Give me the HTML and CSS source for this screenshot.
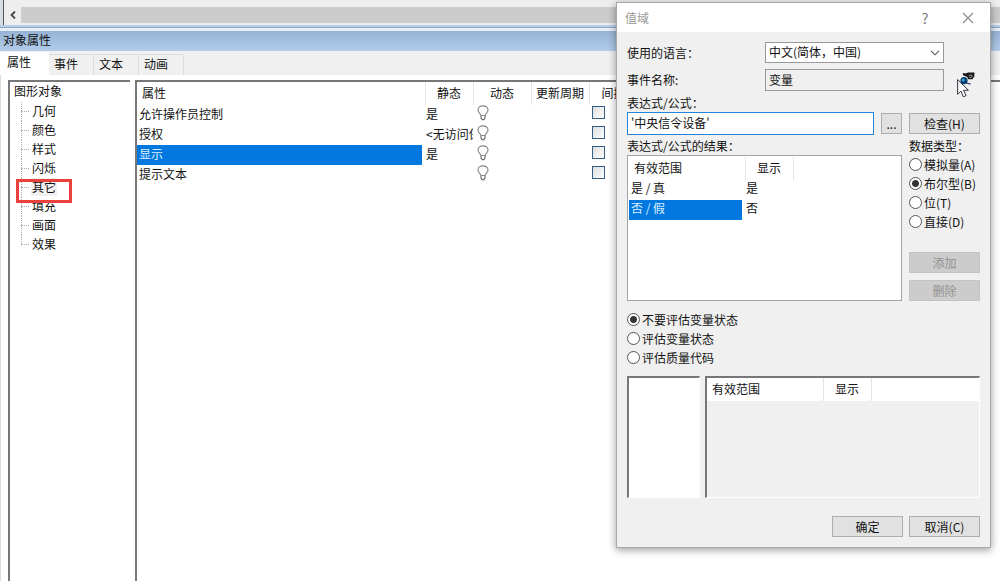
FILE: index.html
```html
<!DOCTYPE html>
<html lang="zh-CN">
<head>
<meta charset="utf-8">
<title>对象属性</title>
<link rel="stylesheet" href="styles.css">
</head>
<body>
<svg class="defs" aria-hidden="true">
  <symbol id="bulb" viewBox="0 0 12 16">
    <path d="M3.900 10.600C3.900 8.800 1 7.600 1 4.900 1 2.400 3.200.9 6 .9s5 1.500 5 4c0 2.700-2.900 3.900-2.900 5.700z" fill="#fff" stroke="#858585" stroke-width="1.100"/>
    <path d="M4 11v2L5.200 14.600H6.800L8 13V11" fill="#fff" stroke="#666" stroke-width="1.100"/>
  </symbol>
</svg>
<main class="app">
  <div class="canvas-edge">
    <div class="scrollbar">
      <button class="scroll-left" aria-label="向左滚动"><svg width="6" height="8" viewBox="0 0 6 8"><path d="M5 .5 1.500 4 5 7.500" fill="none" stroke="#444" stroke-width="1.800"/></svg></button>
      <div class="thumb"></div>
    </div>
  </div>
  <h1 class="panel-title">对象属性</h1>
  <nav class="tabs" role="tablist">
    <button class="tab active" role="tab" aria-selected="true">属性</button>
    <button class="tab" role="tab">事件</button>
    <button class="tab" role="tab">文本</button>
    <button class="tab" role="tab">动画</button>
  </nav>
  <div class="panes">
    <section class="tree">
      <div class="root">图形对象</div>
      <ul>
        <li><span>几何</span></li>
        <li><span>颜色</span></li>
        <li><span>样式</span></li>
        <li><span>闪烁</span></li>
        <li class="marked"><span>其它</span></li>
        <li><span>填充</span></li>
        <li><span>画面</span></li>
        <li><span>效果</span></li>
      </ul>
    </section>
    <section class="props">
      <table class="grid main-grid">
        <colgroup><col class="c-name"><col class="c-static"><col class="c-dyn"><col class="c-cycle"><col></colgroup>
        <thead><tr><th class="first">属性</th><th>静态</th><th>动态</th><th>更新周期</th><th class="indirect">间接</th></tr></thead>
        <tbody>
          <tr><td><span>允许操作员控制</span></td><td>是</td><td class="icon"><svg class="bulb"><use href="#bulb"/></svg></td><td></td><td><input type="checkbox" aria-label="间接 允许操作员控制"></td></tr>
          <tr><td><span>授权</span></td><td>&lt;无访问保护&gt;</td><td class="icon"><svg class="bulb"><use href="#bulb"/></svg></td><td></td><td><input type="checkbox" aria-label="间接 授权"></td></tr>
          <tr class="selected"><td><span>显示</span></td><td>是</td><td class="icon"><svg class="bulb"><use href="#bulb"/></svg></td><td></td><td><input type="checkbox" aria-label="间接 显示"></td></tr>
          <tr><td><span>提示文本</span></td><td></td><td class="icon"><svg class="bulb"><use href="#bulb"/></svg></td><td></td><td><input type="checkbox" aria-label="间接 提示文本"></td></tr>
        </tbody>
      </table>
    </section>
  </div>
</main>

<form class="dialog" role="dialog" aria-labelledby="dlg-title">
  <header class="dialog-bar">
    <h2 id="dlg-title">值域</h2>
    <button type="button" class="bar-btn help" aria-label="帮助">?</button>
    <button type="button" class="bar-btn" aria-label="关闭"><svg width="12" height="12" viewBox="0 0 12 12"><path d="M1 1l10 10M11 1 1 11" fill="none" stroke="#888" stroke-width="1.100"/></svg></button>
  </header>
  <div class="dialog-body">
    <div class="fields">
      <label for="lang">使用的语言：</label>
      <div class="select-wrap">
        <select id="lang"><option>中文(简体，中国)</option></select>
        <svg class="chevron" width="10" height="6" viewBox="0 0 10 6"><path d="M1 .8 5 4.800 9 .8" fill="none" stroke="#555" stroke-width="1.100"/></svg>
      </div>
      <label for="event">事件名称:</label>
      <input id="event" type="text" value="变量" readonly>
      <button type="button" class="trigger" aria-label="选择触发器">
        <svg width="20" height="26" viewBox="0 0 20 26">
          <path d="M5.500 1.200H9.500L11 .6h6.400v3.600l-2 3h-4L10 4.700 6.300 3.600z" fill="#151515"/>
          <path d="M12 4.200c.5-1.700 3-1.700 3 0 0 1.200-1.700 1.700-2.600 1" fill="none" stroke="#bbb" stroke-width=".9"/>
          <path d="M9 10.700l4.500 1.400" stroke="#336" stroke-width="1.200"/>
          <path d="M.6 7.500v14.800l3.300-3.200 2.500 5.700 2.700-1.200-2.500-5.300h4.800z" fill="#fff" stroke="#34313f" stroke-width="1"/>
          <circle cx="7" cy="8.700" r="3.600" fill="#07406f"/>
          <circle cx="6.200" cy="7.900" r="1.500" fill="#35a5dc"/>
        </svg>
      </button>
    </div>
    <label class="caption" for="expr">表达式/公式：</label>
    <div class="expr-row">
      <input id="expr" type="text" value="'中央信令设备'">
      <button type="button" class="btn">...</button>
      <button type="button" class="btn wide">检查(H)</button>
    </div>
    <div class="results">
      <section class="result-col">
        <div class="caption">表达式/公式的结果：</div>
        <div class="result-box">
          <table class="grid">
            <colgroup><col class="c-range"><col class="c-show"><col></colgroup>
            <thead><tr><th class="first">有效范围</th><th>显示</th><th></th></tr></thead>
            <tbody>
              <tr><td><span>是 / 真</span></td><td>是</td><td></td></tr>
              <tr class="selected"><td><span>否 / 假</span></td><td>否</td><td></td></tr>
            </tbody>
          </table>
        </div>
      </section>
      <fieldset class="types">
        <legend class="caption">数据类型：</legend>
        <label class="radio"><input type="radio" name="type">模拟量(A)</label>
        <label class="radio"><input type="radio" name="type" checked>布尔型(B)</label>
        <label class="radio"><input type="radio" name="type">位(T)</label>
        <label class="radio"><input type="radio" name="type">直接(D)</label>
        <div class="type-actions">
          <button type="button" class="btn" disabled>添加</button>
          <button type="button" class="btn" disabled>删除</button>
        </div>
      </fieldset>
    </div>
    <fieldset class="states" aria-label="评估方式">
      <label class="radio"><input type="radio" name="state" checked>不要评估变量状态</label>
      <label class="radio"><input type="radio" name="state">评估变量状态</label>
      <label class="radio"><input type="radio" name="state">评估质量代码</label>
    </fieldset>
    <div class="lower">
      <div class="well side"></div>
      <div class="well list">
        <table class="grid">
          <colgroup><col class="c-range"><col class="c-show"><col></colgroup>
          <thead><tr><th class="first">有效范围</th><th>显示</th><th></th></tr></thead>
        </table>
      </div>
    </div>
    <footer class="actions">
      <button type="submit" class="btn wide">确定</button>
      <button type="button" class="btn wide">取消(C)</button>
    </footer>
  </div>
</form>
</body>
</html>
```
FILE: styles.css
```css
*, *::before, *::after { box-sizing: border-box; }

body, button, input, select {
  font: 12px/18px "Noto Sans CJK SC", sans-serif;
  color: #111;
}

body { margin: 0; background: #fff; }
h1, h2, ul, fieldset, legend { margin: 0; padding: 0; border: 0; font: inherit; list-style: none; }
button { padding: 0; border: 0; background: none; }
.defs { position: absolute; width: 0; height: 0; }

.app {
  display: flex;
  flex-direction: column;
  min-height: 100vh;
  overflow: hidden;
  background: #f0f0f0;
}

.canvas-edge {
  padding: 7px 0 2px 3px;
  background: linear-gradient(90deg, #d5dfea 3px, #555 3px, #555 4px, #eee 4px);
  border-bottom: 1px solid #b5d0e8;
}
.scrollbar { display: flex; height: 16px; padding-left: 2px; }
.scroll-left { width: 16px; display: grid; place-items: center; }
.thumb { flex: 1; background: #ccc; }

.panel-title {
  margin-top: 5px;
  padding: 0 3px;
  height: 20px;
  background: linear-gradient(#97b3d5, #b2cdea);
  box-shadow: 0 -3px #e8edf8, 0 -4px #8faac5, 0 -5px #b5d0e8;
}

.tabs { display: flex; align-items: flex-end; padding-top: 1px; background: #f0f0f0; }
.tab {
  width: 45px;
  height: 21px;
  padding: 0 0 2px 5px;
  text-align: left;
  border: 1px solid #ddd;
  border-width: 1px 1px 0 0;
}
.tab.active { width: 49px; height: 23px; padding: 0 0 4px 7px; background: #fff; border-color: #fff; }

.panes { flex: 1; display: flex; gap: 5px; padding: 5px 0 0 7px; background: #fff; border-left: 1px solid #ddd; }
.tree { width: 122px; padding: 0 0 0 4px; border: solid #777; border-width: 2px 0 0 2px; }
.root { height: 20px; }
.tree ul { margin-left: 7px; }
.tree li {
  position: relative;
  height: 19px;
  padding-left: 10px;
  background: repeating-linear-gradient(#aaa 0 1px, #fff 1px 2px) left top / 1px 100% no-repeat;
}
.tree li:last-child { background-size: 1px 50%; }
.tree li::before { content: ""; position: absolute; left: 0; top: 9px; width: 8px; border-top: 1px dotted #aaa; }
.tree li span { display: inline-block; padding: 0 1px; }
.marked span { background: #f0f0f0; }
.tree .marked::after { content: ""; position: absolute; z-index: 1; left: -5px; top: 1px; width: 56px; height: 24px; border: 3px solid #e9423c; }

.props { flex: 1; min-width: 0; border: solid #777; border-width: 2px 0 0 2px; }

.grid { width: 100%; border-collapse: collapse; table-layout: fixed; background: #fff; }
.grid th { height: 23px; padding: 0 0 2px; font-weight: 400; border-right: 1px solid #e5e5e5; white-space: nowrap; }
.grid th:last-child { border: 0; }
.grid .first { padding-left: 5px; text-align: left; }
.grid td { height: 20px; padding: 0 0 0 1px; white-space: nowrap; overflow: hidden; vertical-align: top; line-height: 16px; }
.main-grid td { line-height: 18px; }
.grid td span { display: block; height: 20px; margin: 0 3px 0 -1px; padding-left: 2px; }
.grid .selected span { background: #0078e0; color: #d9eeff; }
.c-name { width: 288px; }
.c-static { width: 48px; }
.c-dyn { width: 58px; }
.c-cycle { width: 58px; }
.grid .indirect { padding-left: 12px; text-align: left; }
.grid .icon { padding-left: 4px; }
.bulb { display: block; width: 12px; height: 16px; }
.grid input {
  appearance: none;
  display: block;
  width: 13px;
  height: 13px;
  margin: 1px 0 0 2px;
  border: 1px solid #365f87;
  background: linear-gradient(135deg, #ddd, #fff);
}

.dialog {
  position: absolute;
  top: 2px;
  right: 9px;
  width: 375px;
  background: #f0f0f0;
  border: 1px solid #a8a8a8;
  box-shadow: 0 2px 8px #0006;
}
.dialog-bar { display: flex; align-items: center; height: 29px; padding: 0 8px; background: #fff; }
.dialog-bar h2 { flex: 1; color: #999; }
.bar-btn { width: 28px; height: 28px; margin-left: 15px; display: grid; place-items: center; }
.help { color: #777; font-size: 14px; }

.dialog-body { padding: 10px; }
.fields { display: grid; grid-template-columns: 138px 179px 20px; row-gap: 6px; align-items: center; }
.select-wrap { position: relative; grid-column: 2 / 4; width: 179px; }
.chevron { position: absolute; right: 4px; top: 8px; pointer-events: none; }
select, input[type="text"] { width: 100%; height: 21px; padding: 0 3px 2px; border: 1px solid #999; border-radius: 0; outline: 0; background: #fff; }
select { display: block; appearance: none; }
#event { height: 22px; background: #f0f0f0; }
.trigger { position: relative; width: 20px; height: 21px; margin-left: 13px; }
.trigger svg { position: absolute; left: 0; top: 2px; }

.caption { display: block; height: 18px; white-space: nowrap; }
.fields + .caption { margin-top: 3px; }
.expr-row { display: grid; grid-template-columns: 1fr 21px 71px; gap: 7px; align-items: center; }
.expr-row input[type="text"] { height: 23px; border-color: #2484d8; }
.btn { height: 21px; line-height: 19px; border: 1px solid #adadad; background: #e1e1e1; }
.btn:disabled { color: #929292; background: #ccc; border-color: #c3c3c3; }

.results { display: grid; grid-template-columns: 1fr 71px; gap: 7px; margin-top: 2px; }
.result-box { height: 146px; border: 1px solid #a5a5a5; padding: 1px; background: #fff; }
.c-range { width: 116px; }
.c-show { width: 48px; }
.types { display: flex; flex-direction: column; min-width: 0; }
.radio { display: flex; align-items: center; gap: 2px; height: 19px; white-space: nowrap; }
.radio input {
  appearance: none;
  flex: none;
  width: 13px;
  height: 13px;
  margin: 0;
  border: 1px solid #555;
  border-radius: 50%;
  background: #fff;
}
.radio input:checked { background: radial-gradient(circle, #333 3px, #fff 4px); }
.type-actions { display: grid; gap: 7px; margin-top: 21px; }
.states { margin-top: 9px; }

.lower { display: grid; grid-template-columns: 73px 1fr; gap: 5px; height: 122px; margin-top: 9px; }
.well { border: solid; border-width: 2px 1px 1px 2px; border-color: #777 #fff #fff #777; }
.side { background: #fff; }
.actions { display: flex; justify-content: flex-end; gap: 6px; margin-top: 18px; }
.actions .wide { width: 71px; }
```
